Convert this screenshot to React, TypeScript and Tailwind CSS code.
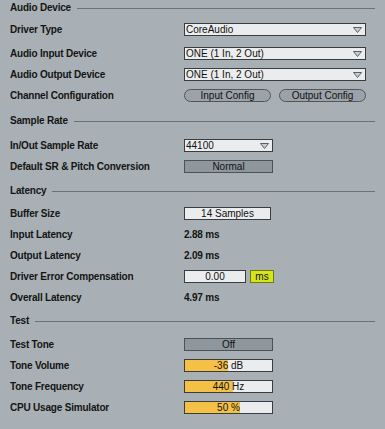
import React from "react";

const font = { fontFamily: '"Liberation Sans", Arial, sans-serif' };

function Heading({ title, className = "" }: { title: string; className?: string }) {
  return (
    <div className={`flex h-[16px] items-center gap-[6px] ${className}`}>
      <span className="text-[10px] font-bold leading-none tracking-[-0.2px] text-[#141414]">{title}</span>
      <div className="h-px flex-1 bg-[#6c7278]" />
    </div>
  );
}

function Row({ label, children, className = "" }: { label: string; children?: React.ReactNode; className?: string }) {
  return (
    <div className={`flex h-[21px] items-center ${className}`}>
      <div className="w-[174px] shrink-0 text-[10px] font-bold leading-none tracking-[-0.2px] text-[#141414]">{label}</div>
      <div className="flex items-center">{children}</div>
    </div>
  );
}

function Arrow() {
  return (
    <svg width="9" height="6" viewBox="0 0 9 6" className="shrink-0">
      <polygon points="0.5,0.5 8.5,0.5 4.5,5.5" fill="#c9cdd1" stroke="#5a5f64" strokeWidth="1" />
    </svg>
  );
}

function Dropdown({ value, w }: { value: string; w: string }) {
  return (
    <div className={`flex h-[13px] ${w} items-center justify-between border border-[#3a3d40] bg-[#ebeced] pl-[1px] pr-[3px]`}>
      <span className="text-[10px] leading-none text-[#111]">{value}</span>
      <Arrow />
    </div>
  );
}

function Pill({ label }: { label: string }) {
  return (
    <div className="flex h-[13px] w-[87px] items-center justify-center rounded-full border border-[#50565b] bg-[#9ba2a8] text-[10px] leading-none text-[#111]">
      {label}
    </div>
  );
}

function GreyBtn({ label }: { label: string }) {
  return (
    <div className="flex h-[13px] w-[89px] items-center justify-center border border-[#4c5257] bg-[#8e979e] text-[10px] leading-none text-[#111]">
      {label}
    </div>
  );
}

function Box({ value, w }: { value: string; w: string }) {
  return (
    <div className={`flex h-[13px] ${w} items-center justify-center border border-[#3a3d40] bg-[#ebeced] text-[10px] leading-none text-[#111]`}>
      {value}
    </div>
  );
}

function Slider({ value, fill }: { value: string; fill: number }) {
  return (
    <div className="relative flex h-[13px] w-[89px] items-center justify-center border border-[#3a3d40] bg-[#ebeced]">
      <div className="absolute left-0 top-0 h-full bg-[#f4c045]" style={{ width: `${fill}px` }} />
      <span className="relative text-[10px] leading-none text-[#111]">{value}</span>
    </div>
  );
}

function Val({ v }: { v: string }) {
  return <span className="text-[10px] font-bold leading-none tracking-[-0.2px] text-[#141414]">{v}</span>;
}

export default function App() {
  return (
    <div style={font} className="h-[429px] w-[385px] overflow-hidden bg-[#a9b0b5] px-[10px]">
      <Heading title="Audio Device" />
      <Row label="Driver Type" className="mt-[3px]">
        <Dropdown value="CoreAudio" w="w-[182px]" />
      </Row>
      <Row label="Audio Input Device" className="mt-[3px]">
        <Dropdown value="ONE (1 In, 2 Out)" w="w-[182px]" />
      </Row>
      <Row label="Audio Output Device">
        <Dropdown value="ONE (1 In, 2 Out)" w="w-[182px]" />
      </Row>
      <Row label="Channel Configuration">
        <div className="flex gap-[8px]">
          <Pill label="Input Config" />
          <Pill label="Output Config" />
        </div>
      </Row>

      <Heading title="Sample Rate" className="mt-[7px]" />
      <Row label="In/Out Sample Rate" className="mt-[6px]">
        <Dropdown value="44100" w="w-[89px]" />
      </Row>
      <Row label="Default SR & Pitch Conversion">
        <GreyBtn label="Normal" />
      </Row>

      <Heading title="Latency" className="mt-[6px]" />
      <Row label="Buffer Size" className="mt-[4px]">
        <Box value="14 Samples" w="w-[87px]" />
      </Row>
      <Row label="Input Latency">
        <Val v="2.88 ms" />
      </Row>
      <Row label="Output Latency">
        <Val v="2.09 ms" />
      </Row>
      <Row label="Driver Error Compensation">
        <div className="flex gap-[4px]">
          <Box value="0.00" w="w-[62px]" />
          <div className="flex h-[13px] w-[24px] items-center justify-center border border-[#6f7a10] bg-[#d6e41c] text-[10px] leading-none text-[#111]">
            ms
          </div>
        </div>
      </Row>
      <Row label="Overall Latency">
        <Val v="4.97 ms" />
      </Row>

      <Heading title="Test" className="mt-[5px]" />
      <Row label="Test Tone" className="mt-[5px]">
        <GreyBtn label="Off" />
      </Row>
      <Row label="Tone Volume">
        <Slider value="-36 dB" fill={43} />
      </Row>
      <Row label="Tone Frequency">
        <Slider value="440 Hz" fill={48} />
      </Row>
      <Row label="CPU Usage Simulator">
        <Slider value="50 %" fill={55} />
      </Row>
    </div>
  );
}
